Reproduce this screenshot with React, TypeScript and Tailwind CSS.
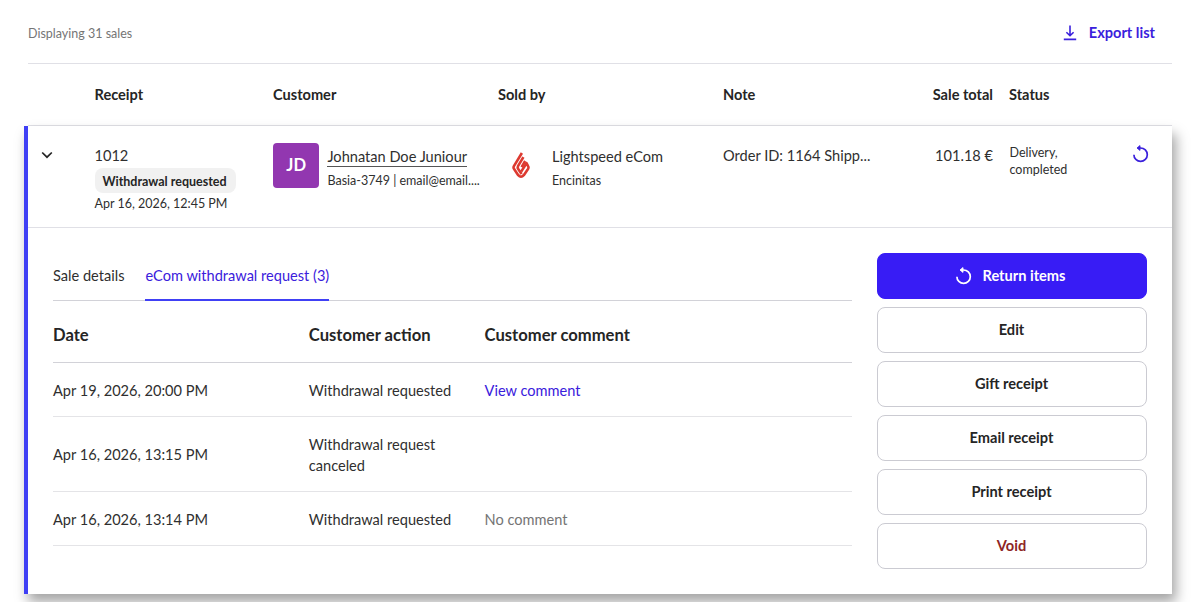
import type { ReactNode } from "react";

const columns = "grid grid-cols-[66.5px_178.5px_225px_225px_270px_16.5px_122px_1fr]";

function ReturnIcon({ className }: { className?: string }) {
  return (
    <svg viewBox="0 0 18 18" className={className} fill="none" stroke="currentColor" strokeWidth="1.7">
      <path d="M1.9 9.7a6.7 6.7 0 1 0 6.7-6.7H6" />
      <path d="M8 0.6 5 3 8 5.4Z" fill="currentColor" strokeWidth="0.9" strokeLinejoin="round" />
    </svg>
  );
}

function DownloadIcon() {
  return (
    <svg viewBox="0 0 14 16" className="h-4 w-3.5" fill="none" stroke="currentColor" strokeWidth="1.6">
      <path d="M7 0.5V10.5M3.4 7.2 7 10.7l3.6-3.5M0.8 14.4h12.4" />
    </svg>
  );
}

function FlameLogo() {
  return (
    <svg viewBox="0 0 18 27" className="h-[27px] w-[18px]" fill="none" stroke="#dd3a30" strokeWidth="2.6" strokeLinejoin="round">
      <path d="M9.9 1 1.9 14.2Q1.1 15.6 2.1 17L6.2 23.2Q9 26.4 11.8 23.2L16 17Q16.9 15.6 16.1 14.2L14.5 11.2 9.2 19.6" />
      <path d="M11.4 5.2 6 14.2Q5.3 15.6 6.2 16.9L9.6 22" />
      <path d="M13.2 9 9.6 15.1" />
    </svg>
  );
}

function ActionButton({ children, className }: { children: ReactNode; className?: string }) {
  return (
    <button
      className={`flex h-[46px] w-full items-center justify-center rounded-lg border pb-px text-[14.6px] font-bold leading-5 ${className ?? "border-[#cbcbd2] pr-px text-[#252525]"}`}
    >
      {children}
    </button>
  );
}

function DetailRow({ date, action, comment, className }: { date: string; action: string; comment?: ReactNode; className: string }) {
  return (
    <div className={`grid grid-cols-[255.8px_175.8px_1fr] items-center border-b border-[#e4e4e7] ${className}`}>
      <span>{date}</span>
      <span className="w-[150px]">{action}</span>
      <span>{comment}</span>
    </div>
  );
}

export default function App() {
  return (
    <div className="h-[602px] w-[1198px] overflow-hidden bg-white font-['Lato',sans-serif] text-[14.58px] leading-[21px] text-[#2f2f2f]">
      <header className="ml-7 mr-[26px] flex h-16 items-center justify-between border-b border-[#e0e0e6] pr-[17px]">
        <span className="pt-1 text-[12.5px] text-[#757575]">Displaying 31 sales</span>
        <button className="flex items-center gap-3 pt-0.5 font-bold text-[#3a20dc]">
          <DownloadIcon />
          Export list
        </button>
      </header>

      <div className={`${columns} ml-7 mr-[26px] h-[62px] items-center border-b border-[#e0e0e6] font-bold text-[#252525]`}>
        <span />
        <span>Receipt</span>
        <span>Customer</span>
        <span>Sold by</span>
        <span>Note</span>
        <span />
        <span className="-ml-[93px] w-[200px]">
          <span className="inline-block w-[76.5px] text-right">Sale total</span>
          <span className="ml-4">Status</span>
        </span>
      </div>

      <section className="ml-6 mr-[26px] h-[468px] border-l-4 border-[#4040f5] bg-white shadow-[4px_8px_12px_rgba(0,0,0,0.36)]">
        <div className={`${columns} h-[102px] border-b border-[#e0e0e6]`}>
          <svg viewBox="0 0 12 8" className="ml-[13px] mt-[25px] h-2 w-3" fill="none" stroke="#252525" strokeWidth="1.7">
            <path d="M1.2 1.5 6 6.2l4.8-4.7" />
          </svg>
          <div className="pt-[19px]">
            <div>1012</div>
            <div className="mt-0.5 flex h-[25px] w-[141px] items-center justify-center rounded-lg bg-[#f1f1f1] pr-px pt-px text-[12.5px] font-bold text-[#252525]">
              Withdrawal requested
            </div>
            <div className="text-[12.5px]">Apr 16, 2026, 12:45 PM</div>
          </div>
          <div className="flex gap-2 pt-[16.7px]">
            <div className="ml-[0.4px] flex size-[45.7px] shrink-0 items-center justify-center rounded bg-[#9237b0] text-[16.6px] font-bold text-white">JD</div>
            <div className="ml-[0.4px] pt-1">
              <div className="w-fit border-b border-[#555] leading-[19px]">Johnatan Doe Juniour</div>
              <div className="mt-[3px] text-[12.5px]">Basia-3749 | email@email....</div>
            </div>
          </div>
          <div className="flex pt-[20px]">
            <div className="w-[54px] pl-[14px] pt-[6px]">
              <FlameLogo />
            </div>
            <div>
              <div>Lightspeed eCom</div>
              <div className="mt-[3px] text-[12.5px]">Encinitas</div>
            </div>
          </div>
          <div className="flex justify-between pt-[19px]">
            <span>Order ID: 1164 Shipp...</span>
            <span>101.18 €</span>
          </div>
          <span />
          <div className="w-[70px] pt-[19px] text-[12.5px] leading-[16.5px]">Delivery, completed</div>
          <div className="pt-[19px] text-[#3a20dc]">
            <ReturnIcon className="size-[18px]" />
          </div>
        </div>

        <div className="flex justify-between pl-[25px] pr-[25px] pt-[25px]">
          <div className="w-[799px]">
            <nav className="flex h-12 gap-[21px] border-b border-[#d2d2d8]">
              <button className="pb-[3px]">Sale details</button>
              <button className="h-12 border-b-2 border-[#4040f5] pb-px text-[#3a20dc]">eCom withdrawal request (3)</button>
            </nav>
            <div className="grid h-[62px] grid-cols-[255.8px_175.8px_1fr] items-center border-b border-[#d2d2d8] pt-2 text-[16.6px] font-bold text-[#252525]">
              <span>Date</span>
              <span>Customer action</span>
              <span>Customer comment</span>
            </div>
            <DetailRow
              className="h-[54px] pt-[2px]"
              date="Apr 19, 2026, 20:00 PM"
              action="Withdrawal requested"
              comment={<a className="text-[#3a20dc]">View comment</a>}
            />
            <DetailRow className="h-[75px] pt-px" date="Apr 16, 2026, 13:15 PM" action="Withdrawal request canceled" />
            <DetailRow
              className="h-[54px] pt-[2px]"
              date="Apr 16, 2026, 13:14 PM"
              action="Withdrawal requested"
              comment={<span className="text-[#757575]">No comment</span>}
            />
          </div>
          <div className="flex w-[270px] flex-col gap-2">
            <ActionButton className="gap-[9px] border-[#381cf5] bg-[#381cf5] pr-[3px] text-white">
              <ReturnIcon className="size-[18px]" />
              Return items
            </ActionButton>
            <ActionButton>Edit</ActionButton>
            <ActionButton>Gift receipt</ActionButton>
            <ActionButton>Email receipt</ActionButton>
            <ActionButton>Print receipt</ActionButton>
            <ActionButton className="border-[#cbcbd2] pr-px text-[#8e2525]">Void</ActionButton>
          </div>
        </div>
      </section>
    </div>
  );
}
